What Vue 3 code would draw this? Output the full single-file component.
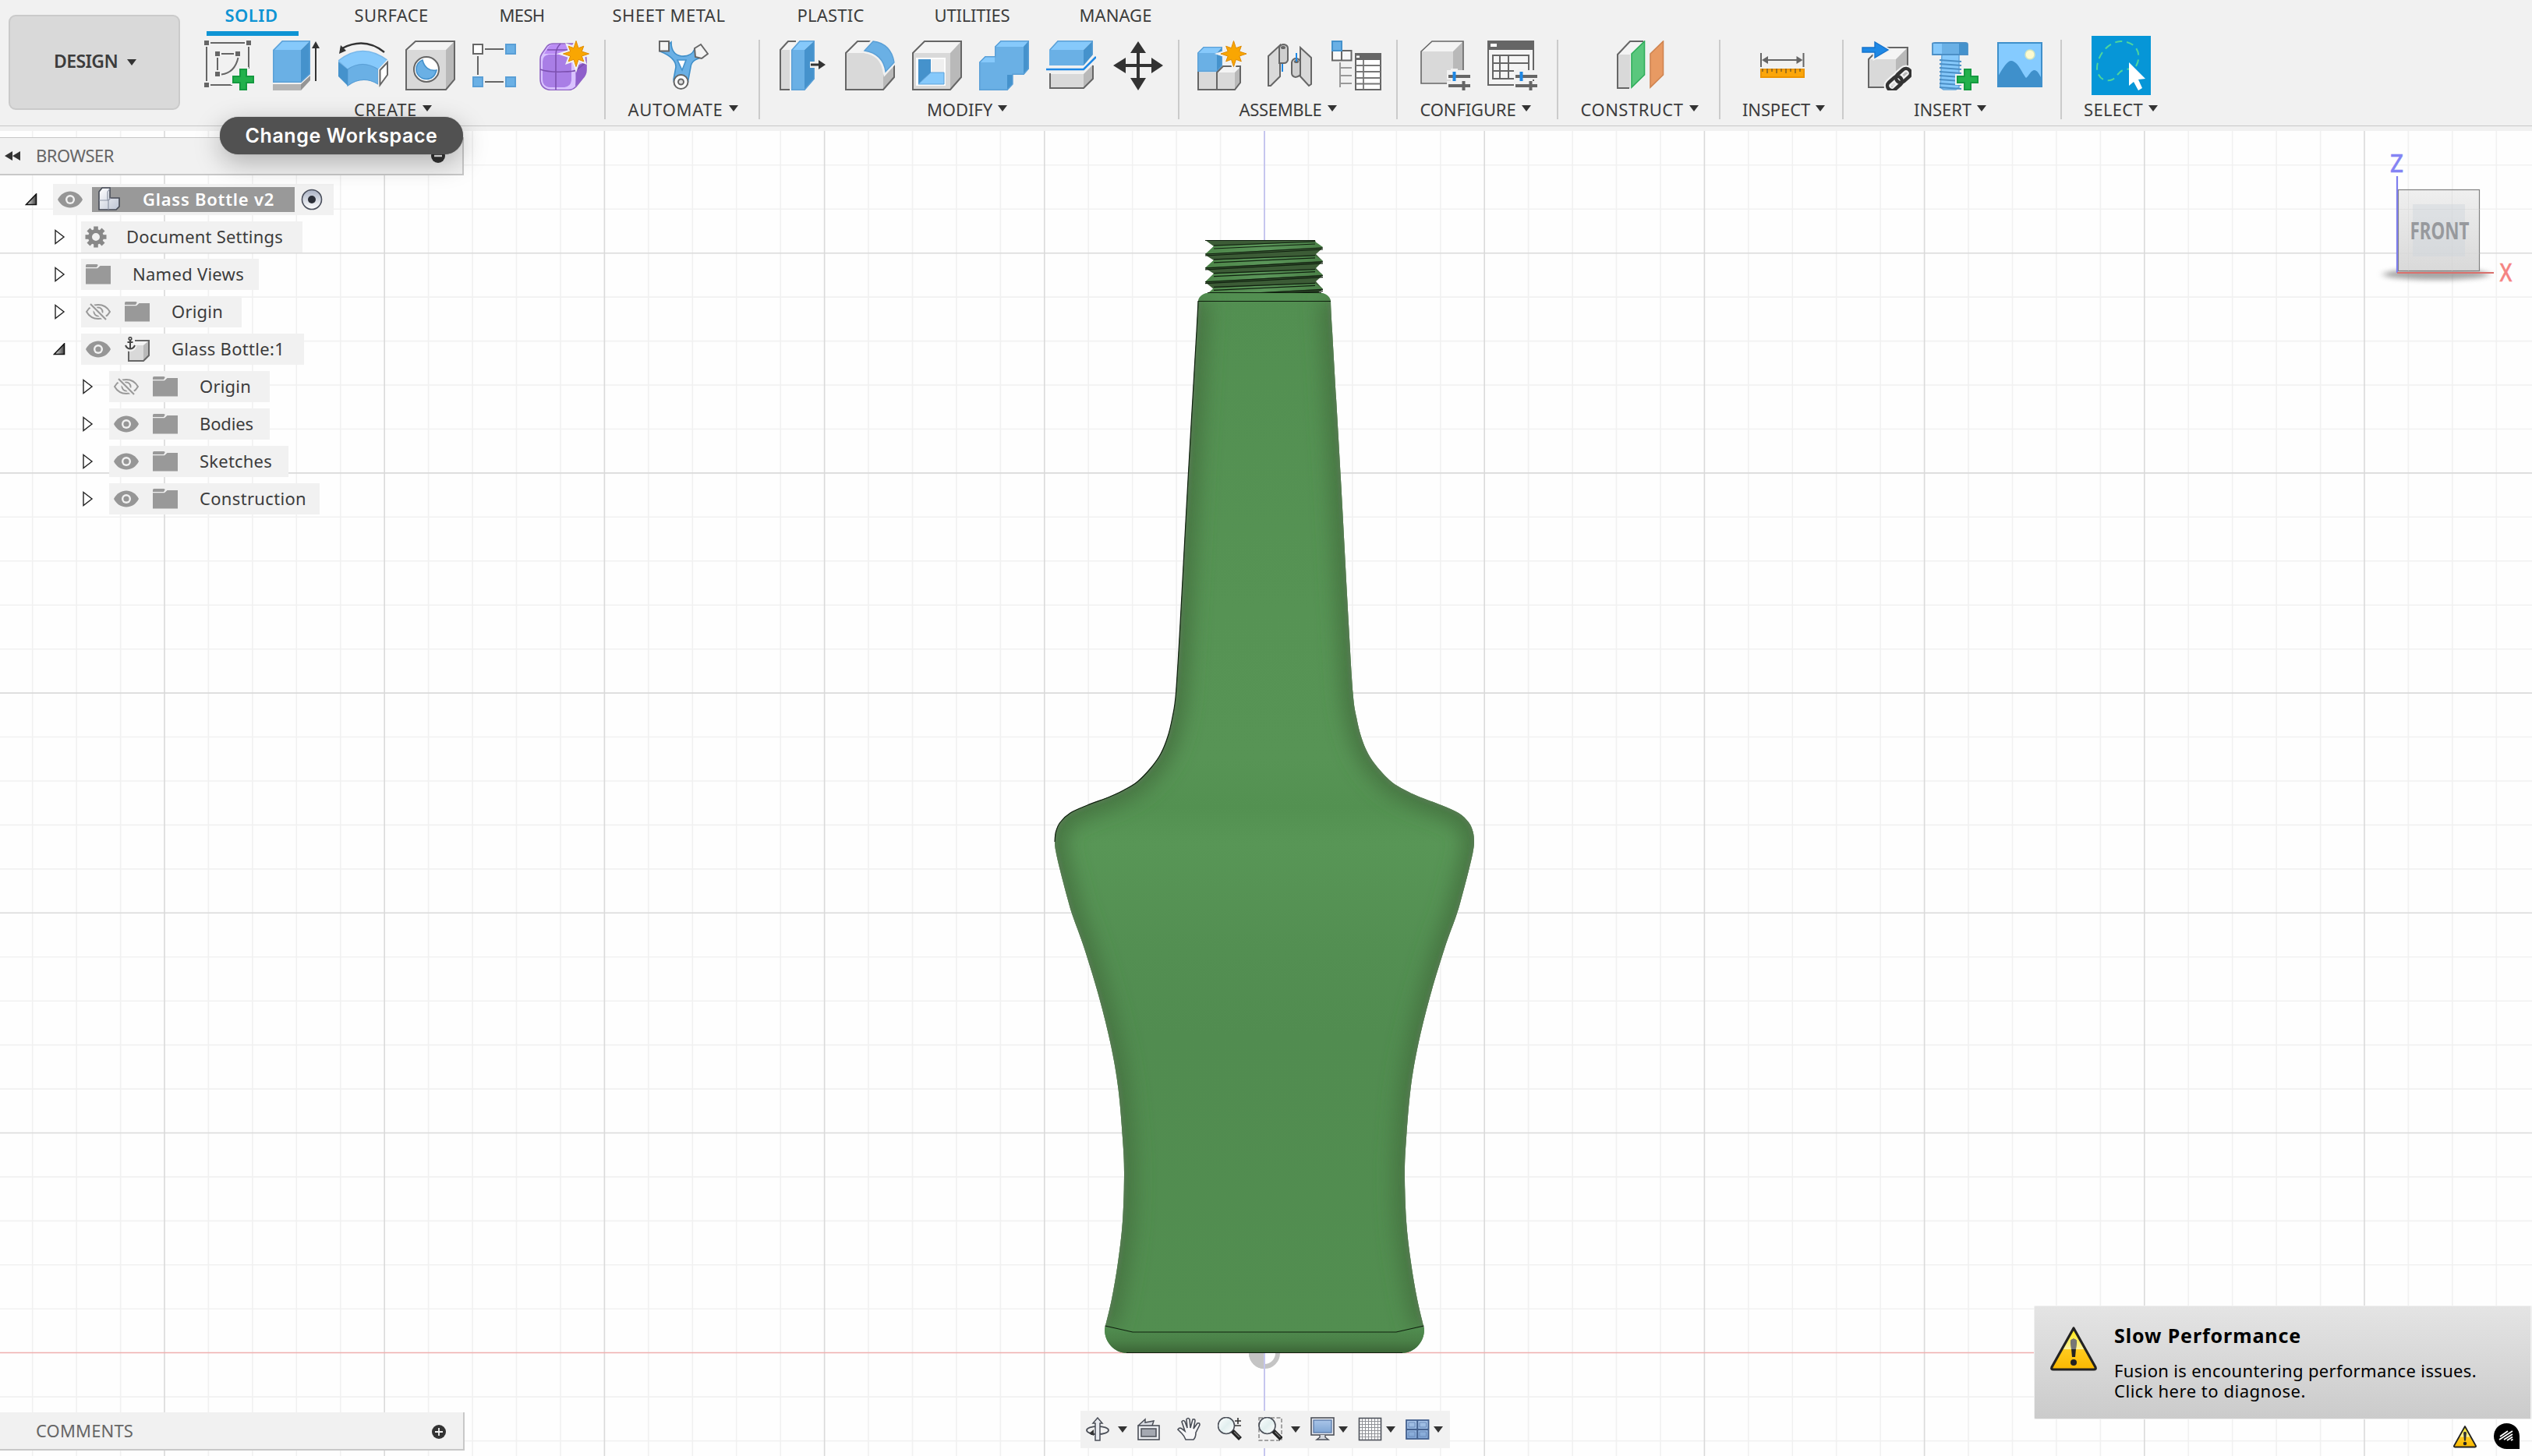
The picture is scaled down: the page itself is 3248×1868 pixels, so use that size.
<script setup>
/* Stretches a label to a fixed advance width by adjusting its letter spacing. */
const vFit = {
  mounted(el, { value }) {
    if (!value) return
    const range = document.createRange()
    range.selectNodeContents(el)
    const natural = range.getBoundingClientRect().width
    const count = el.textContent.trim().length
    el.style.letterSpacing = ((value - natural) / count).toFixed(3) + 'px'
  },
}

/* ---- palette and drawing helpers for the ribbon glyphs ---- */
const BLUE = '#6ab0e5', SKY = '#86c9fb', DEEP = '#4592cc'
const GREY = '#d9d9d9', PALE = '#f4f4f4', SHADE = '#b9b9b9', LINE = '#666'
const poly = (pts, fill, extra = '') => `<polygon points="${pts}" fill="${fill}" ${extra}/>`
const rect = (x, y, w, h, fill, extra = '') => `<rect x="${x}" y="${y}" width="${w}" height="${h}" fill="${fill}" ${extra}/>`
const path = (d, fill, extra = '') => `<path d="${d}" fill="${fill}" ${extra}/>`
const pen = (c = LINE, w = 2) => `stroke="${c}" stroke-width="${w}"`
const plus = (x, y) =>
  path(`M${x + 10} ${y + 1}h8v9h9v8h-9v9h-8v-9h-9v-8h9z`, '#22b14c', pen('#f1f1f1', 6)) +
  path(`M${x + 10} ${y + 1}h8v9h9v8h-9v9h-8v-9h-9v-8h9z`, '#22b14c', pen('#159a40', 2))
const star = (cx, cy, r = 16.5) => {
  const p = []
  for (let i = 0; i < 16; i++) {
    const a = (i * Math.PI) / 8 - Math.PI / 2
    const q = i % 2 ? r * 0.48 : i % 4 === 0 ? r : r * 0.84
    p.push((cx + q * Math.cos(a)).toFixed(1) + ',' + (cy + q * Math.sin(a)).toFixed(1))
  }
  return poly(p.join(' '), '#f9a602', pen('#f1f1f1', 5)) + poly(p.join(' '), '#f9a602', pen('#e08a00', 1))
}
const sliders =
  rect(34, 38, 30, 12, '#f1f1f1') + rect(34, 52, 30, 12, '#f1f1f1') + rect(39, 36, 9, 18, '#f1f1f1') +
  rect(36, 44, 28, 4, LINE) + rect(36, 56, 28, 4, LINE) + rect(41.5, 40, 4, 12, '#1e88e5') + rect(53.5, 52, 4, 12, LINE)

const glyph = {
  sketch:
    [[0, 0], [54, 0], [0, 54], [14, 14], [40, 14], [14, 40]].map(([x, y]) => rect(x, y, 6, 6, LINE)).join('') +
    path('M8 3H52M3 8V52M57 8V36M8 57H36M22 17H38M17 22V38M43.5 22C41 33 35 42 22 43.5', 'none', pen()) + plus(36, 36),
  extrude:
    poly('2,12 38,12 38,54 2,54', BLUE) + poly('2,12 14,0 50,0 38,12', SKY) + poly('38,12 50,0 50,43 38,54', DEEP) +
    path('M2.8 12.5L14.3 .8H49.2V43L38 53.2H2.8z', 'none', pen('#5a9fd6', 1.4)) +
    poly('2,56 38,56 38,64 2,64', '#b4b4b4') + poly('38,56 50,45 50,51 38,64', '#959595') +
    path('M57 52V8', 'none', pen('#333', 2)) + poly('57,1 62,10 52,10', '#333'),
  revolve:
    path('M0 26Q31 1 64 26L51 37Q31 24 12 37z', SKY, pen('#79b8ea', 1.4)) +
    path('M12 37Q31 24 51 37V56Q31 44 12 58z', BLUE, pen('#5a9fd6', 1.2)) + poly('0,27 12,37 12,58 0,46', DEEP) +
    poly('53.5,38 63,28 63,44 53.5,57', '#fff', pen('#f1f1f1', 5)) +
    poly('53.5,38 63,28 63,44 53.5,57', '#fff', pen()) +
    path('M59 15Q34 -5 5 10', 'none', pen('#333', 2.4)) + poly('1,17 3,6 10,13', '#333'),
  hole:
    poly('1,12 13,1 63,1 52,12', PALE) + poly('1,12 52,12 52,63 1,63', GREY) + poly('52,12 63,1 63,50 52,63', SHADE) +
    poly('1,12 13,1 63,1 63,50 52,63 1,63', 'none', pen()) +
    `<circle cx="27" cy="37" r="16" fill="#fff" ${pen()}/>` +
    path('M22 25C24 34 31 40 40 38C38 46 34 49.500 27 49.500C19 49.500 14 43 14 37C14 31 17 27 22 25z', BLUE, pen(DEEP, 1.6)),
  pattern:
    rect(1, 5, 12, 12, '#fff', pen()) +
    [[43, 5], [1, 47], [43, 47]].map(([x, y]) => rect(x, y, 12, 12, BLUE, pen('#5a9fd6', 2))).join('') +
    path('M16 11H40M16 53H40M7 20V44', 'none', pen()),
  form:
    path('M1 24Q1 20 3 17L10 7Q13 4 18 4H46Q60 10 60 26V38Q60 44 55 49L47 59Q43 63.500 37 63.500H14Q1 62 1 49z', '#d9c2ff', pen('#8f62c4', 1.6)) +
    path('M11 9Q14 5 19 5H42L36 17H6z', '#bb8df5') + path('M12 18H32Q41 19 41 27V51Q40 59 32 60H12Q4 58 4 50V27Q4 19 12 18z', '#a97ee6') +
    path('M46 33L60 27V38Q60 44 55 49L46 59Q47 48 46 33z', '#8f5fcb') +
    path('M27 4Q21 10 21 18V63M1 37Q12 41 30 40Q44 40 47 38L60 28M10 12H40', 'none', pen('#7c50b0', 1.6)) + star(47, 17),
  automate:
    path('M2 14L16 2Q16 18 29 20Q42 21 46 11L56 22Q42 24 41 34L38 50A9.500 9.500 0 1 1 19 50L22 34Q22 22 2 14z', BLUE, pen('#3f8fc9', 1.6)) +
    path('M24 25H35L30 38z', '#fff', pen(DEEP, 1.6)) + rect(1, 1, 12, 12.5, '#f4f4f4', pen()) +
    poly('46,10 54,5 63,17 55,23 47,21', '#f4f4f4', pen()) +
    `<circle cx="28.500" cy="53" r="9" fill="#fff" ${pen()}/><circle cx="28.500" cy="53" r="3.500" fill="#ddd" ${pen()}/>`,
  presspull:
    poly('3,12 14,1 24,1 16,12', PALE) + rect(3, 12, 12, 51, GREY) + path('M23 1H13L3 12V63H15', 'none', pen()) +
    poly('17,12 34,12 34,64 17,64', BLUE) + poly('17,12 28,0 47,0 34,12', SKY) + poly('34,12 47,0 47,49 34,64', DEEP) +
    path('M17.700 12.500L28 .7H46.300V49L34 63.300H17.700z', 'none', pen('#5a9fd6', 1.4)) +
    path('M41 31H52', 'none', pen('#f1f1f1', 8)) + path('M42 31H54', 'none', pen('#333', 3)) + poly('52,25 61,31 52,37', '#333'),
  fillet:
    poly('1,16 17,1 36,1 25,16', PALE) + path('M1 16H24Q46 18 49 43V63H1z', GREY) + poly('49,44 63,31 63,47 49,63', SHADE) +
    path('M35 1H16L1 16V63H49L63 47V31', 'none', pen()) +
    path('M25 13L36 1Q59 4 63 28L52 40Q49 17 25 13z', BLUE, pen('#f1f1f1', 6)) +
    path('M25 13L36 1Q59 4 63 28L52 40Q49 17 25 13z', BLUE, pen('#5a9fd6', 1.4)),
  shell:
    poly('1,16 16,1 63,1 49,16', PALE) + rect(1, 16, 48, 47, GREY) + poly('49,16 63,1 63,47 49,63', SHADE) +
    poly('1,16 16,1 63,1 63,47 49,63 1,63', 'none', pen()) + rect(5, 22, 38, 36, '#fdfdfd') + rect(25, 24, 16, 16, '#efefef') +
    poly('8,24 24,24 24,41 8,56', DEEP) + poly('8,56 24,41 41,41 41,56', SKY, pen('#5a9fd6', 1)),
  combine:
    path('M0 28L8 20H20V8L28 0H64V36L57 44H43V56L36 64H0z', BLUE) +
    poly('0,28 8,20 20,20 20,28', SKY) + poly('20,8 28,0 64,0 57,8', SKY) + poly('57,8 64,0 64,36 57,44', DEEP) +
    poly('36,44 43,44 43,56 36,64', DEEP) + path('M.7 28L8 20.700H20.700V8L28 .7H63.300V36L57 43.300H43V56L36 63.300H.7z', 'none', pen('#5a9fd6', 1.4)),
  split:
    poly('4,12 48,12 48,32 4,32', BLUE) + poly('4,12 15,0 60,0 48,12', SKY) + poly('48,12 60,0 60,18 48,32', DEEP) +
    path('M4.700 12L15 .7H59.300V18', 'none', pen('#5a9fd6', 1.4)) +
    path('M0 37H48L64 21', 'none', pen('#1e88e5', 2.600)) +
    rect(5, 43, 43, 18, GREY) + poly('48,43 60,31 60,50 48,61', SHADE) + path('M5 42V61H48L60 49V32', 'none', pen()),
  move:
    path('M32 1L42 16H34V30H49V22L64 32L49 42V34H34V48H42L32 64L22 48H30V34H16V42L0 32L16 22V30H30V16H22z', '#333'),
  newcomp:
    poly('0,16 8,8 32,8 25,16', SKY) + rect(0, 16, 25, 24, BLUE) + poly('25,16 32,8 32,32 25,40', DEEP) +
    path('M.7 40V16L8 8.700H31.300V32L25 39.500H.7', 'none', pen('#5a9fd6', 1.3)) +
    rect(1, 41, 24, 22, GREY) + rect(25, 41, 23, 22, GREY) + poly('25,41 33,33 56,33 48,41', PALE) + poly('48,41 56,33 56,54 48,63', SHADE) +
    path('M1 40V63H48L55 54V33H33L25 41V63', 'none', pen()) + star(46.500, 17),
  joint:
    path('M5 20L20 6V46L8 58H5z', GREY, pen()) + path('M19 9Q20 5 25 5Q30 6 30 10V25Q29 29 25 29H19z', '#cfcfcf', pen()) +
    `<ellipse cx="24" cy="9" rx="3" ry="2" fill="${LINE}"/>` + path('M23 30V40', 'none', pen('#1e88e5', 2)) +
    path('M35 28Q36 23 41 23Q46 24 46 28V44Q43 47 40 47Q35 46 35 42z', '#cfcfcf', pen()) + path('M46 9L60 22V56L57 58L46 46z', GREY, pen()) +
    `<ellipse cx="41" cy="27" rx="3" ry="2" fill="${LINE}"/>` + path('M41 16V27', 'none', pen('#1e88e5', 2)),
  table:
    rect(1, 13, 24.500, 12.500, '#f8f8f8', pen()) + path('M13 13V26', 'none', pen()) + rect(1, 1, 12, 12, BLUE, pen(DEEP, 2)) +
    path('M11 28V60M11 35H26M11 45H26M11 55H26', 'none', pen('#999', 2)) +
    rect(31, 17, 32, 46, '#fff', pen()) + rect(31, 17, 32, 8, LINE) + rect(32, 19.500, 4, 2.500, '#fff') +
    path('M31 32H63M31 40H63M31 48H63M31 55.500H63M41 25V63', 'none', pen('#777', 1.800)),
  config:
    poly('1,14 15,1 55,1 42,14', PALE) + rect(1, 14, 41, 41, GREY) + poly('42,14 55,1 55,42 42,55', SHADE) +
    poly('1,14 15,1 55,1 55,42 42,55 1,55', 'none', pen(LINE, 1.600)) + sliders,
  configtable:
    rect(1, 1, 58, 56, '#f4f4f4', pen()) + rect(0, 0, 60, 12, LINE) + rect(4, 4, 8, 4, '#fff') +
    path('M7 19H53V49H7zM7 29H53M7 39H53M16 19V49M27 19V49', 'none', pen()) + sliders,
  planes:
    rect(3, 18, 16, 43, GREY) + poly('3,18 19,1 36,1 20,18', PALE) + path('M36 1H19L3 18V61H18', 'none', pen()) +
    poly('21,17 37.500,1 37.500,44 21,60', '#5ac77d', pen('#2fae5b', 1.600)) + poly('45,17 61.500,1 61.500,44 45,60', '#e89a63', pen('#cf8450', 1.600)),
  measure:
    rect(4, 37, 55, 10, '#fba60a', pen('#ec9500', 2)) + path('M6 36V40M12 36V42M18 36V40M24 36V42M30 36V40M36 36V42M42 36V40M48 36V42M54 36V40', 'none', pen('#8a6420', 1.600)) +
    path('M4 16V34M58.500 16V34M8 25H54', 'none', pen()) + poly('5,25 13,20 13,30', LINE) + poly('57.500,25 49.500,20 49.500,30', LINE),
  insertlink:
    poly('9,24 24,9 59,9 44,24', PALE) + rect(9, 24, 35, 36, GREY) + poly('44,24 59,9 59,45 44,60', SHADE) + path('M9 60V24L24 9H59V45L44 60z', 'none', pen()) +
    path('M1 9H17V2L34 12L17 22V15H1z', '#1e88e5', pen('#f1f1f1', 5)) + path('M1 9H17V2L34 12L17 22V15H1z', '#1e88e5', pen('#1673cc', 1.400)) +
    '<g fill="none" transform="rotate(-42 48 50)"><g stroke="#f1f1f1" stroke-width="9"><rect x="30" y="44" width="21" height="12" rx="6"/><rect x="45" y="44" width="21" height="12" rx="6"/></g><g stroke="#333" stroke-width="4.500"><rect x="30" y="44" width="21" height="12" rx="6"/><rect x="45" y="44" width="21" height="12" rx="6"/></g></g>',
  bolt:
    path('M17 18H39V60L35 63H19L15 60z', SKY, pen('#6aa9dc', 1.600)) +
    path('M5 4Q5 3 8 3H47Q50 3 50 5V18H5z', SKY, pen('#4b8fc6', 1.800)) + rect(17, 4, 22, 13, BLUE) + rect(39, 4, 11, 13, DEEP) +
    path('M14 25L42 27M14 30L42 32M14 35L42 37M14 40L42 42M14 45L42 47M14 50L42 52M14 55L42 57M14 60L42 62', 'none', pen('#4b8fc6', 1.800)) + plus(36, 36),
  picture:
    rect(3, 3, 56, 56, '#85cbff') + path('M3 46C10 34 15 26 20 26C29 27 34 42 39 48C43 45 45 38 50 38C54 39 56 43 59 49V59H3z', '#3f90cb') +
    rect(3, 3, 56, 56, 'none', pen('#3f90cb', 2)) + `<circle cx="44" cy="18" r="6" fill="#fdfbd0" stroke="#d5e6c0" stroke-width="1.500"/>`,
}

const tabs = [
  { t: 'SOLID', w: 68, on: true }, { t: 'SURFACE', w: 95 }, { t: 'MESH', w: 58 }, { t: 'SHEET METAL', w: 145 },
  { t: 'PLASTIC', w: 86 }, { t: 'UTILITIES', w: 97 }, { t: 'MANAGE', w: 93 },
]
const groups = [
  { k: 'create', t: 'CREATE', w: 81, icons: ['sketch', 'extrude', 'revolve', 'hole', 'pattern', 'form'] },
  { k: 'automate', t: 'AUTOMATE', w: 122, icons: ['automate'] },
  { k: 'modify', t: 'MODIFY', w: 84, icons: ['presspull', 'fillet', 'shell', 'combine', 'split', 'move'] },
  { k: 'assemble', t: 'ASSEMBLE', w: 106, icons: ['newcomp', 'joint', 'table'] },
  { k: 'configure', t: 'CONFIGURE', w: 123, icons: ['config', 'configtable'] },
  { k: 'construct', t: 'CONSTRUCT', w: 132, icons: ['planes'] },
  { k: 'inspect', t: 'INSPECT', w: 87, icons: ['measure'] },
  { k: 'insert', t: 'INSERT', w: 74, icons: ['insertlink', 'bolt', 'picture'] },
  { k: 'select', t: 'SELECT', w: 76, icons: [], select: true },
]

/* ---- browser tree ---- */
const tree = [
  { t: 'Glass Bottle v2', lv: 0, open: true, eye: 'on', icon: 'comp', root: true, w: 169 },
  { t: 'Document Settings', lv: 1, icon: 'gear', w: 201, row: 284 },
  { t: 'Named Views', lv: 1, icon: 'folder', w: 143, row: 228 },
  { t: 'Origin', lv: 1, eye: 'off', icon: 'folder', w: 66, row: 206 },
  { t: 'Glass Bottle:1', lv: 1, open: true, eye: 'on', icon: 'anchor', w: 145, row: 286 },
  { t: 'Origin', lv: 2, eye: 'off', icon: 'folder', w: 66, row: 206 },
  { t: 'Bodies', lv: 2, eye: 'on', icon: 'folder', w: 69, row: 206 },
  { t: 'Sketches', lv: 2, eye: 'on', icon: 'folder', w: 93, row: 230 },
  { t: 'Construction', lv: 2, eye: 'on', icon: 'folder', w: 137, row: 270 },
]
const gearTeeth = Array.from({ length: 8 }, (_, i) => rect(13.2, 2.5, 5.6, 8, '#888', `transform="rotate(${i * 45} 16 16)"`)).join('')
const small = {
  on: path('M0 16C7 2 25 2 32 16C25 30 7 30 0 16z', '#969696') + '<circle cx="16" cy="16" r="6" fill="#f1f1f1"/><circle cx="16" cy="16" r="3.600" fill="#969696"/>',
  off: path('M1 16C8 4 24 4 31 16C24 28 8 28 1 16z', 'none', pen('#999', 2)) + `<circle cx="16" cy="16" r="5.500" fill="none" ${pen('#999', 2)}/>` +
    path('M4 5L26 26', 'none', pen('#f1f1f1', 6)) + path('M6 6L26 26', 'none', pen('#999', 2.200)),
  folder: path('M0 4.500Q0 3 1.500 3H14Q16 3 15.500 4.500L14 7H0z', '#999') + path('M0 8.200H15L18.500 5H32V28.500H0z', '#999'),
  gear: gearTeeth + '<circle cx="16" cy="16" r="7.500" fill="none" stroke="#888" stroke-width="5"/>',
  comp: '<linearGradient id="cg" x1="0" x2="1" y1="0" y2="1"><stop offset="0" stop-color="#fff"/><stop offset="1" stop-color="#bcc4d4"/></linearGradient>' +
    path('M2 29V6L6 1H16V14H28V25L24 29H2z', 'url(#cg)', pen('#454a55', 1.600)) + path('M2 17H14V29M14 17L17 14M13 6V17M13 6L16 2', 'none', pen('#8d95a5', 1.200)),
  anchor: poly('5,11 11,5 31,5 25,11', PALE) + rect(5, 11, 19, 20, GREY) + poly('24,11 31,5 31,24 24,31', SHADE) + path('M5 14V31H24L31 24V5H13', 'none', pen(LINE, 2)) +
    path('M7 4V15M3 7H11M1 11Q3 16 7 16Q11 16 13 11', 'none', pen('#f1f1f1', 6)) +
    path('M7 4V15M3.500 7H10.500M1 11Q3 15.500 7 15.500Q11 15.500 13 11', 'none', pen('#444', 2)) + `<circle cx="7" cy="2.500" r="1.800" fill="none" ${pen('#444', 1.600)}/>`,
}

/* ---- navigation bar ---- */
const ink = '#4b4f58'
const lens = (cx) => `<circle cx="${cx}" cy="11" r="10.500" fill="url(#lg)" ${pen(ink, 1.600)}/>` + path(`M${cx + 8} 18L${cx + 18} 28`, 'none', pen('#222', 5.500)) + path(`M${cx + 10} 19L${cx + 17} 26`, 'none', pen('#777', 1.500))
const lg = '<linearGradient id="lg" x1="0" x2="1" y1="0" y2="1"><stop offset="0" stop-color="#fff"/><stop offset=".5" stop-color="#e2efef"/><stop offset="1" stop-color="#fff"/></linearGradient>'
const bg = '<linearGradient id="bg" x1="0" x2="0" y1="0" y2="1"><stop offset="0" stop-color="#a9c5e8"/><stop offset="1" stop-color="#7fa5d4"/></linearGradient>'
const gridMarks = Array.from({ length: 6 }, (_, i) => `M${5.500 + i * 4} 2V29M2 ${5.500 + i * 4}H29`).join('')
const nav = [
  { k: 'orbit', caret: true, g: `<ellipse cx="15" cy="17" rx="14" ry="5" fill="none" ${pen(ink, 1.800)}/>` + path('M15 1L21 8H18V30H12V8H9z', '#e9ebf0', pen(ink, 1.500)) + path('M12 22H6', 'none', pen(ink, 1.800)) + poly('4,21 10,16 10,24', '#333') },
  { k: 'look', g: path('M2 11L11 3L11 7L22 5L20 11', '#d8dbe2', pen(ink, 1.500)) + rect(2, 11, 27, 18, '#eceef2', pen(ink, 1.600)) + rect(6, 15, 19, 10, '#a4a8b1', pen(ink, 1.500)) },
  { k: 'pan', g: path('M11 29Q9 24 6 21L1 16Q3 13 6 15L10 18L6 6Q8 3 10 6L13 14L12 3Q14 0 16 3L17 14L20 3Q23 2 23 5L21 15L26 8Q29 7 29 10L24 20Q24 26 21 29z', '#f7f7f8', pen(ink, 1.600)) },
  { k: 'zoom', g: lg + lens(11) + path('M22 5H30M26 1V9M22 11H30', 'none', pen('#333', 1.600)) },
  { k: 'fit', caret: true, g: lg + rect(1, 1, 29, 29, 'none', pen('#888', 1.500) + ' stroke-dasharray="5 2.500"') + lens(11.500) },
  { k: 'display', caret: true, g: bg + rect(1, 1, 29, 22, '#e9ebf0', pen(ink, 1.600)) + rect(4, 4, 23, 16, 'url(#bg)', pen('#5878a8', 1.300)) + path('M12 23V26L8 29H23L19 26V23', '#d5d8de', pen(ink, 1.400)) },
  { k: 'grid', caret: true, g: rect(1.500, 1.500, 28, 28, '#fff', pen(ink, 1.600)) + path(gridMarks, 'none', pen('#909297', 1)) },
  { k: 'views', caret: true, g: bg + rect(1, 4, 28.500, 24, 'url(#bg)', pen('#44618f', 1.800)) + path('M15.200 4V28M1 16H30', 'none', pen('#44618f', 2)) + path('M4 7H12V13H4zM18 7H26.500V13H18zM4 19H12V25H4zM18 19H26.500V25H18z', 'none', pen('#6c8cbd', 1)) },
]

/* ---- scene: reference grid and the bottle body ---- */
const cx = 1622, cy = 1735.7, step = 56.44
const lines = { minV: '', majV: '', minH: '', majH: '' }
for (let i = -30; i <= 30; i++) {
  const x = (cx + i * step).toFixed(1), y = (cy + i * step).toFixed(1)
  if (i) lines[i % 5 ? 'minV' : 'majV'] += `M${x} 160V1868`
  if (i) lines[i % 5 ? 'minH' : 'majH'] += `M0 ${y}H3248`
}
const half = [
  [85, 386], [87, 425], [98, 615], [108, 800], [113.5, 889], [118, 920], [124, 945], [133, 967], [145.5, 985], [163, 1003], [180, 1013.5], [198, 1022],
  [227, 1033], [249, 1043], [262, 1055], [267.5, 1067], [269, 1080], [267.5, 1093], [262, 1117], [252, 1155], [246, 1175], [231, 1217],
  [212, 1280], [197, 1341], [187.5, 1397], [182, 1460], [180, 1505], [182, 1567], [188, 1620], [196, 1667], [204.5, 1703],
]
function smooth(pts, first) {
  let d = first ? `M${pts[0]}` : `L${pts[0]}`
  for (let i = 0; i < pts.length - 1; i++) {
    const a = pts[i - 1] || pts[i], b = pts[i], c = pts[i + 1], e = pts[i + 2] || c
    d += `C${b[0] + (c[0] - a[0]) / 6},${b[1] + (c[1] - a[1]) / 6} ${c[0] - (e[0] - b[0]) / 6},${c[1] - (e[1] - b[1]) / 6} ${c[0]},${c[1]}`
  }
  return d
}
const right = half.map(([x, y]) => [cx + x, y])
const left = half.map(([x, y]) => [cx - x, y]).reverse()
const bottle = smooth(right, true) + 'C1829,1718 1817,1736 1798,1736H1446C1427,1736 1415,1718 1417.5,1703' + smooth(left) + 'C1538,380 1544,375.5 1552,375.5H1692C1700,375.5 1706,380 1707,386z'
const outline = smooth(left.slice(14), true)
const sides = smooth(right, true) + smooth(left.slice().reverse(), true)
const threads = [0, 1, 2, 3].map((i) => 308 + i * 17.8)
</script>

<template>
  <div class="app">
    <svg class="scene" viewBox="0 0 3248 1868">
      <defs>
        <linearGradient id="body" x1="0" x2="0" y1="375" y2="1736" gradientUnits="userSpaceOnUse">
          <stop offset="0" stop-color="#528f51" /><stop offset=".3" stop-color="#569354" /><stop offset=".44" stop-color="#579455" />
          <stop offset=".485" stop-color="#539151" /><stop offset=".52" stop-color="#589656" /><stop offset=".62" stop-color="#538f52" />
          <stop offset=".7" stop-color="#518c50" /><stop offset="1" stop-color="#528e50" />
        </linearGradient>
        <linearGradient id="base" x1="0" x2="0" y1="1705" y2="1736" gradientUnits="userSpaceOnUse">
          <stop offset="0" stop-color="#508c4f" /><stop offset=".5" stop-color="#4a8047" /><stop offset="1" stop-color="#3b6536" />
        </linearGradient>
        <linearGradient id="thread" x1="0" x2="1"><stop offset="0" stop-color="#4c8548" /><stop offset=".5" stop-color="#5b965a" /><stop offset="1" stop-color="#4a8047" /></linearGradient>
        <clipPath id="clip"><path :d="bottle" /></clipPath>
        <filter id="soft" x="-20%" y="-20%" width="140%" height="140%"><feGaussianBlur stdDeviation="12" /></filter>
        <filter id="thin" x="-20%" y="-20%" width="140%" height="140%"><feGaussianBlur stdDeviation="2.5" /></filter>
      </defs>
      <path :d="lines.minV + lines.minH" class="minor" />
      <path :d="lines.majV + lines.majH" class="major" />
      <path d="M0 1735.5H3248" class="axis-x" />
      <circle cx="1622" cy="1736" r="17" class="origin-ring" />
      <path d="M1622 1716A20 20 0 0 0 1622 1756z" class="origin-fill" />
      <path d="M1622 160V1868" class="axis-z" />
      <g class="threads">
        <path d="M1546 308H1687L1688 312L1697 318L1688 326L1697 335L1688 344L1697 353L1688 361L1697 371L1690 376H1550L1557 371L1546 362L1557 351L1546 344L1557 334L1546 327L1557 316z" fill="#3c5c36" />
        <g v-for="y in threads" :key="y">
          <path :d="`M1557 ${y + 8}L1687 ${y + 2}L1697 ${y + 9}L1546 ${y + 18}z`" fill="url(#thread)" />
          <path :d="`M1557 ${y + 7}L1687 ${y + 2}M1557 ${y + 11}L1687 ${y + 5}M1546 ${y + 18}L1697 ${y + 10}M1546 ${y + 20}L1697 ${y + 12}`" class="edge" />
        </g>
        <path d="M1546 308.5H1687" class="edge" />
      </g>
      <path :d="bottle" fill="url(#body)" />
      <g clip-path="url(#clip)">
        <path :d="sides" class="shade" filter="url(#soft)" />
        <path :d="sides" class="rim" filter="url(#thin)" />
        <path d="M1410 1701L1453 1709H1791L1835 1701V1740H1410z" fill="url(#base)" />
      </g>
      <path :d="outline" class="edge" />
      <path d="M1549 375.5H1695M1537 386.5H1707M1417.5 1701L1453 1709H1791L1826.5 1701M1445 1735.5H1799" class="edge" />
    </svg>

    <header class="ribbon">
      <button class="workspace"><span v-fit="82">DESIGN</span><i class="caret" /></button>
      <div class="tools">
        <nav class="tabs">
          <span v-for="t in tabs" :key="t.t" class="tab" :class="{ on: t.on }"><b v-fit="t.w">{{ t.t }}</b></span>
        </nav>
        <div class="groups">
          <section v-for="g in groups" :key="g.k" class="group" :class="g.k">
            <div class="icons">
              <svg v-for="i in g.icons" :key="i" viewBox="0 0 64 64" width="64" height="64" v-html="glyph[i]" />
              <div v-if="g.select" class="select-btn">
                <svg viewBox="0 0 76 76" width="76" height="76">
                  <path d="M57 39C65 25 59 7 37 7C22 8 7 24 7 42C8 55 18 60 27 56C35 51 33 45 44 43L54 42" fill="none" stroke="#4fd69c" stroke-width="2" stroke-dasharray="9 6" />
                  <path d="M48 34L69 55L60 56L65 67L60 70L54 59L48 64z" fill="#fff" />
                </svg>
              </div>
            </div>
            <div class="label"><span v-fit="g.w">{{ g.t }}</span><i class="caret" /></div>
          </section>
        </div>
      </div>
    </header>

    <main class="stage">
      <aside class="browser">
        <div class="panel-head">
          <svg width="22" height="12" viewBox="0 0 22 12"><path d="M0 6L10 0V12zM10 6L20 0V12z" fill="#333" /></svg>
          <span v-fit="100">BROWSER</span>
          <svg class="round" width="18" height="18" viewBox="0 0 18 18"><circle cx="9" cy="9" r="9" fill="#333" /><path d="M4 9H14" stroke="#f1f1f1" stroke-width="2.4" /></svg>
        </div>
        <ul class="tree">
          <li v-for="(n, i) in tree" :key="i" :class="['lv' + n.lv, { root: n.root }]">
            <svg v-if="n.open" class="twist" width="16" height="16" viewBox="0 0 16 16">
              <linearGradient :id="'tw' + i" x1="0" x2="1"><stop offset="0" stop-color="#eee" /><stop offset="1" stop-color="#444" /></linearGradient>
              <path d="M1.5 14.5L14.5 1V14.5z" :fill="`url(#tw${i})`" stroke="#111" stroke-width="1.6" />
            </svg>
            <svg v-else class="twist" width="16" height="20" viewBox="0 0 16 20"><path d="M3 1.5L14 10L3 18.5z" fill="#fff" stroke="#222" stroke-width="1.4" /></svg>
            <div class="chip" :style="n.row ? { width: n.row + 'px' } : {}">
              <svg v-if="n.eye" class="eye" width="32" height="32" viewBox="0 0 32 32" v-html="small[n.eye]" />
              <div class="name">
                <svg :class="['kind', n.icon]" width="32" height="32" viewBox="0 0 32 32" v-html="small[n.icon]" />
                <span v-fit="n.w">{{ n.t }}</span>
              </div>
              <svg v-if="n.root" class="radio" width="28" height="28" viewBox="0 0 28 28">
                <linearGradient id="rd" x1="0" x2="0" y1="0" y2="1"><stop offset="0" stop-color="#a9b2c4" /><stop offset="1" stop-color="#fff" /></linearGradient>
                <circle cx="14" cy="14" r="12.5" fill="url(#rd)" stroke="#4a4f5c" stroke-width="1.6" /><circle cx="14" cy="14" r="5" fill="#2b2f38" />
              </svg>
            </div>
          </li>
        </ul>
      </aside>

      <div class="comments">
        <span v-fit="125">COMMENTS</span>
        <svg width="18" height="18" viewBox="0 0 18 18"><circle cx="9" cy="9" r="9" fill="#333" /><path d="M4 9H14M9 4V14" stroke="#f1f1f1" stroke-width="1.8" /></svg>
      </div>

      <div class="navbar">
        <div v-for="n in nav" :key="n.k" :class="['nav', n.k]">
          <svg width="31" height="31" viewBox="0 0 31 31" v-html="n.g" /><i v-if="n.caret" class="caret" />
        </div>
      </div>

      <svg class="cube" width="248" height="200" viewBox="0 0 248 200">
        <defs>
          <linearGradient id="cf" x1="0" x2="0" y1="0" y2="1"><stop offset="0" stop-color="#efefef" /><stop offset="1" stop-color="#d9d9d9" /></linearGradient>
          <filter id="cs" x="-30%" y="-100%" width="160%" height="300%"><feGaussianBlur stdDeviation="5 3" /></filter>
        </defs>
        <ellipse cx="125" cy="172" rx="68" ry="7" fill="#777" opacity=".65" filter="url(#cs)" />
        <rect x="76.5" y="63.5" width="104" height="104" fill="url(#cf)" stroke="#808080" stroke-width="1.2" />
        <path d="M89.5 64V168M145.5 64V168M77 88.5H181M77 145H181" stroke="#cfcfcf" stroke-width="1" opacity=".35" />
        <rect x="95" y="82" width="67" height="67" fill="#cdd3dc" opacity=".42" />
        <path d="M75 46V170" stroke="#7f7fee" stroke-width="2.2" />
        <path d="M75 170H199" stroke="#d9706c" stroke-width="2.2" />
        <text x="91.5" y="127" class="face" textLength="76" lengthAdjust="spacingAndGlyphs">FRONT</text>
        <text x="66" y="41" class="z" textLength="17" lengthAdjust="spacingAndGlyphs">Z</text>
        <text x="206.5" y="181" class="x" textLength="16" lengthAdjust="spacingAndGlyphs">X</text>
      </svg>

      <div class="toast">
        <svg width="64" height="60" viewBox="0 0 64 60">
          <linearGradient id="wn" x1="0" x2="0" y1="0" y2="1"><stop offset="0" stop-color="#ffe500" /><stop offset=".5" stop-color="#fff3a0" /><stop offset=".52" stop-color="#ffcb1f" /><stop offset="1" stop-color="#f9b800" /></linearGradient>
          <path d="M32 4L60 54Q61 57 58 57H6Q3 57 4 54z" fill="url(#wn)" stroke="#222" stroke-width="3.2" stroke-linejoin="round" />
          <path d="M28 20Q32 15 36 20L34 41H30z" fill="#222" /><path d="M28 20Q32 15 36 20L35 31H29z" fill="#777" /><circle cx="32" cy="48" r="4" fill="#222" />
        </svg>
        <div class="msg">
          <strong v-fit="240">Slow Performance</strong>
          <p><span v-fit="465">Fusion is encountering performance issues.</span><br /><span v-fit="246">Click here to diagnose.</span></p>
        </div>
      </div>

      <div class="status">
        <svg width="32" height="30" viewBox="0 0 64 60">
          <path d="M32 4L60 54Q61 57 58 57H6Q3 57 4 54z" fill="url(#wn)" stroke="#222" stroke-width="3.6" stroke-linejoin="round" />
          <path d="M28 20Q32 15 36 20L34 41H30z" fill="#333" /><circle cx="32" cy="48" r="4.5" fill="#222" />
        </svg>
        <svg width="33" height="33" viewBox="0 0 33 33">
          <path d="M16.5 0A16.5 16.5 0 0 1 33 16.5V33H16.5A16.5 16.5 0 0 1 16.5 0z" fill="#000" />
          <path d="M8 17L18 10M7 21L24 10M13 21L24 14M17 22L24 17.5M22 22L24.5 20.5" stroke="#fff" stroke-width="1.8" />
        </svg>
      </div>
    </main>

    <div class="tooltip"><span v-fit="247">Change Workspace</span></div>
  </div>
</template>

<style>
body { margin: 0; background: #fff; overflow: hidden; }
</style>

<style scoped>
.app { position: relative; width: 3248px; height: 1868px; overflow: hidden; background: #fefefe; font-family: "Noto Sans", "Open Sans", sans-serif; color: #3c3c3c; display: flex; flex-direction: column; }
.app svg { display: block; flex: none; }
.scene { position: absolute; inset: 0; width: 3248px; height: 1868px; }
.minor { stroke: #f1f1f1; stroke-width: 1.6; }
.major { stroke: #dadada; stroke-width: 1.6; }
.axis-x { stroke: #efb0b0; stroke-width: 1.6; }
.axis-z { stroke: #c6c6ee; stroke-width: 2; }
.origin-ring { fill: #fff; stroke: #c4c4c4; stroke-width: 6; }
.origin-fill { fill: #c4c4c4; }
.edge { fill: none; stroke: #10200f; stroke-width: 1.2; }
.shade { fill: none; stroke: #477643; stroke-width: 30; }
.rim { fill: none; stroke: #5f7a5b; stroke-width: 5; opacity: .75; }

.ribbon { position: relative; box-sizing: border-box; height: 168px; background: #f1f1f1; display: flex; align-items: flex-start; box-shadow: inset 0 -6px 0 #f1f1f1, inset 0 -7px 0 #c8c8c8; }
.workspace { box-sizing: border-box; width: 220px; height: 122px; margin: 19px 0 0 11px; padding: 0 0 5px 2px; border: 2px solid #cacaca; border-radius: 9px; background: #d9d9d9; font: 600 23px "Noto Sans", sans-serif; color: #3c3c3c; display: flex; align-items: center; justify-content: center; gap: 12px; }
.caret { display: block; flex: none; width: 0; height: 0; border: 6px solid transparent; border-top: 8px solid #333; border-bottom: 0; }
.workspace .caret { margin-top: 5px; }
.tools { display: flex; flex-direction: column; }
.tabs { display: grid; grid-template-columns: 118px 238px 97px 280px 135px 228px 140px; margin-left: 34px; height: 46px; }
.tab { position: relative; box-sizing: border-box; padding-top: 4px; text-align: center; height: 46px; line-height: 30px; font-size: 22px; white-space: nowrap; }
.tab b { font-weight: 400; }
.tab.on { color: #0e94d4; border-bottom: 6px solid #0e94d4; padding-right: 3px; }
.tab.on b { font-weight: 600; }
.groups { display: flex; height: 108px; margin-top: 5px; margin-left: 7px; }
.group { box-sizing: border-box; height: 102px; border-right: 2px solid #cbcbcb; display: flex; flex-direction: column; align-items: center; }
.create { width: 539px; } .automate { width: 198px; } .modify { width: 538px; } .assemble { width: 280px; }
.configure { width: 206px; } .construct { width: 208px; } .inspect { width: 158px; } .insert { width: 280px; }
.select { width: 156px; border-right: 0; }
.icons { display: flex; gap: 22px; height: 64px; margin-top: 1px; padding-left: 4px; flex: none; }
.select-btn { width: 76px; height: 76px; margin-top: -6px; margin-left: -8px; background: #0696d7; }
.label { display: flex; align-items: center; gap: 7px; height: 30px; margin-top: 9px; font-size: 22px; line-height: 30px; white-space: nowrap; flex: none; }
.create .label { margin-right: 5px; }
.automate .label { margin-left: 2px; }
.modify .label, .configure .label, .insert .label, .select .label { margin-right: 5px; }
.construct .label { margin-left: 2px; }
.inspect .label { margin-left: 6px; }
.label .caret { margin-top: -2px; }

.stage { position: relative; flex: 1; }
.panel-head { box-sizing: border-box; width: 595px; height: 49px; margin-top: 8px; padding: 0 22px 2px 6px; background: #f1f1f1; border: 1px solid #c8c8c8; border-left: 0; border-right-width: 2px; border-bottom-width: 2px; display: flex; align-items: center; font-size: 22px; color: #666; }
.panel-head span { margin-left: 18px; }
.panel-head svg { margin-top: 2px; }
.panel-head .round { margin-left: auto; }
.tree { list-style: none; margin: 11px 0 0; padding: 0; display: flex; flex-direction: column; gap: 8px; }
.tree li { display: flex; align-items: center; height: 40px; font-size: 22px; white-space: nowrap; }
.lv0 { padding-left: 32px; } .lv1 { padding-left: 68px; } .lv2 { padding-left: 104px; }
.twist { margin-right: 20px; }
.chip { box-sizing: border-box; height: 40px; background: #f1f1f1; display: flex; align-items: center; padding-left: 6px; }
.eye { margin-right: 18px; }
.name { display: flex; align-items: center; height: 36px; }
.name span { margin-left: 28px; margin-top: -2px; }
.name .gear + span { margin-left: 23px; }
.gear { margin-left: -3px; }
.root .name { height: 32px; width: 260px; background: #999; color: #fff; font-weight: 600; }
.root .eye { margin-right: 12px; }
.root .comp { margin-left: 7px; }
.root .name span { margin-left: 26px; }
.root .radio { margin: 0 14px 0 8px; }

.comments { position: absolute; left: 0; top: 1644px; box-sizing: border-box; width: 596px; height: 49px; padding: 0 22px 0 46px; background: #f1f1f1; border: 0 solid #c8c8c8; border-width: 0 2px 2px 0; display: flex; align-items: center; justify-content: space-between; font-size: 22px; color: #666; }
.comments span { margin-top: -1px; }
.comments svg { margin-top: 2px; }
.navbar { position: absolute; left: 1386px; top: 1642px; box-sizing: border-box; width: 474px; height: 48px; background: #f1f1f1; display: flex; align-items: center; padding: 0 0 2px 7px; }
.nav { display: flex; align-items: center; }
.nav .caret { border-top-width: 8px; margin-top: 2px; }
.orbit .caret { margin-left: 10px; margin-right: 12px; }
.look, .pan, .zoom { margin-right: 21px; }
.fit .caret { margin-left: 11px; margin-right: 13px; }
.display .caret, .grid .caret { margin-left: 5px; margin-right: 13px; }
.views .caret { margin-left: 5px; }

.cube { position: absolute; left: 3000px; top: 12px; }
.face { font: 700 30px "Noto Sans", sans-serif; fill: #97999d; }
.z { font: 500 32px "Noto Sans", sans-serif; fill: #8484f4; stroke: #8484f4; stroke-width: .4; }
.x { font: 500 32px "Noto Sans", sans-serif; fill: #f58482; stroke: #f58482; stroke-width: .4; }

.toast { position: absolute; left: 2609px; top: 1507px; box-sizing: border-box; width: 639px; height: 146px; padding: 24px 0 0 18px; border: 1px solid #f0f0f0; border-right: 2px solid #f0f0f0; border-radius: 2px; background: linear-gradient(#e4e4e4, #cbcbcb); color: #000; display: flex; }
.msg { margin-left: 20px; white-space: nowrap; }
.msg strong { display: block; margin-top: -5px; font-size: 25px; line-height: 36px; font-weight: 700; }
.msg p { margin: 14px 0 0; font-size: 22px; line-height: 26px; }
.status { position: absolute; left: 3146px; top: 1658px; display: flex; align-items: center; gap: 21px; }

.tooltip { position: absolute; left: 282px; top: 150px; width: 312px; height: 48px; border-radius: 24px; background: #515151; color: #fff; font: 600 25px/49px Inter, sans-serif; text-align: center; white-space: nowrap; box-shadow: 0 0 1px rgba(0,0,0,.6), 0 10px 34px rgba(0,0,0,.28); }
</style>
